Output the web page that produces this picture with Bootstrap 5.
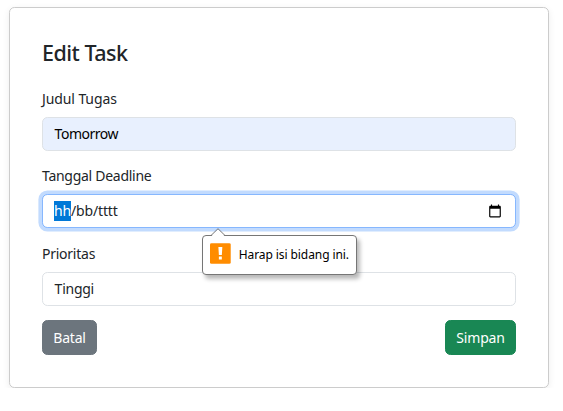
<!DOCTYPE html>
<html lang="id">
<head>
<meta charset="utf-8">
<meta name="viewport" content="width=device-width, initial-scale=1">
<title>Edit Task</title>
<link href="https://cdn.jsdelivr.net/npm/bootstrap@5.3.0/dist/css/bootstrap.min.css" rel="stylesheet">
<style>
body { font: 14px/21.6px "Noto Sans", "Open Sans", sans-serif; overflow: hidden; }
.task-card { width: 540px; height: 381px; margin: 7px 0 0 9px; padding: 32px; border-color: #ccc; border-radius: 5.4px; box-shadow: 0 2px 7px rgba(0,0,0,.075); }
.task-title { font-size: 21.5px; line-height: 26px; font-weight: 500; margin: 0 0 22px; }
.task-title span { letter-spacing: -.5px; }
.form-label { display: block; height: 22px; margin: 0 0 7px; font-size: 14px; }
.field { margin-bottom: 15px; }
.field-title { margin-bottom: 14px; }
.form-control { height: 34px; padding: 0 11.6px; font-size: 14px; line-height: 32px; border-radius: 5.4px; }
.form-control.autofilled { background: #e8f0fe; color: #000; }
.date-box { border-color: #86b7fe; box-shadow: 0 0 0 3.6px #c2dbfe; padding-left: 11px; }
.date-part { background: #0078d7; color: #fff; line-height: 20px; }
.calendar-icon { margin-right: 1px; }
.t-tom { letter-spacing: -.48px; }
.t-tgl { letter-spacing: -.28px; }
.t-judul { letter-spacing: -.1px; }
.t-date, .t-prio, .t-tinggi { letter-spacing: -.15px; }
.t-tinggi, .t-prio { letter-spacing: -.25px; }
.prio { margin-bottom: 14px; }
.btn { height: 35px; padding: 0; font-size: 14px; line-height: 33px; border-radius: 5.4px; }
.btn-batal { width: 55px; letter-spacing: -.2px; }
.btn-simpan { width: 71px; letter-spacing: -.2px; }
.bubble { position: absolute; left: 159px; top: 40px; width: 155px; height: 40px; padding: 0 7px; background: #fff; border: 1px solid #767676; border-radius: 4px; box-shadow: 3px 4px 4px rgba(0,0,0,.28); color: #000; font-size: 12px; z-index: 3; white-space: nowrap; }
.bubble-tip { position: absolute; left: 7px; top: -8px; }
.bubble-icon { margin-top: -3px; }
.bubble-text { margin-left: 8px; letter-spacing: -.08px; }
</style>
</head>
<body class="bg-white">
<main class="card task-card">
  <h1 class="task-title"><span>Edit Task</span></h1>
  <form class="d-flex flex-column">
    <div class="field field-title">
      <div class="form-label"><span class="t-judul">Judul Tugas</span></div>
      <div class="form-control autofilled"><span class="t-tom">Tomorrow</span></div>
    </div>
    <div class="field">
      <div class="form-label"><span class="t-tgl">Tanggal Deadline</span></div>
      <div class="form-control date-box d-flex align-items-center justify-content-between position-relative">
        <span class="t-date"><span class="date-part d-inline-block">hh</span>/bb/tttt</span>
        <svg class="calendar-icon" width="14" height="14" viewBox="0 0 24 24"><path d="M20 3h-1V1h-2v2H7V1H5v2H4c-1.100 0-2 .9-2 2v16c0 1.100.9 2 2 2h16c1.100 0 2-.9 2-2V5c0-1.100-.9-2-2-2zm0 18H4V8h16v13z"/></svg>
        <div class="bubble d-flex align-items-center">
          <svg class="bubble-tip" width="16" height="9" viewBox="0 0 16 9"><path d="M1 8.500 8 1.200l7 7.300V9H1z" fill="#fff"/><path d="M1 7.500 8 .7l7 6.800" fill="none" stroke="#767676"/></svg>
          <svg class="bubble-icon" width="21" height="21" viewBox="0 0 21 21"><rect width="21" height="21" rx="1.500" fill="#ff8c00"/><path d="M8.500 4h4l-.5 8H9zM9 13.500h3v3H9z" fill="#fff"/></svg>
          <span class="bubble-text">Harap isi bidang ini.</span>
        </div>
      </div>
    </div>
    <div class="field prio">
      <div class="form-label"><span class="t-prio">Prioritas</span></div>
      <div class="form-control"><span class="t-tinggi">Tinggi</span></div>
    </div>
    <div class="d-flex justify-content-between">
      <button type="button" class="btn btn-secondary btn-batal">Batal</button>
      <button type="button" class="btn btn-success btn-simpan">Simpan</button>
    </div>
  </form>
</main>
<script src="https://cdn.jsdelivr.net/npm/bootstrap@5.3.0/dist/js/bootstrap.bundle.min.js"></script>
</body>
</html>
